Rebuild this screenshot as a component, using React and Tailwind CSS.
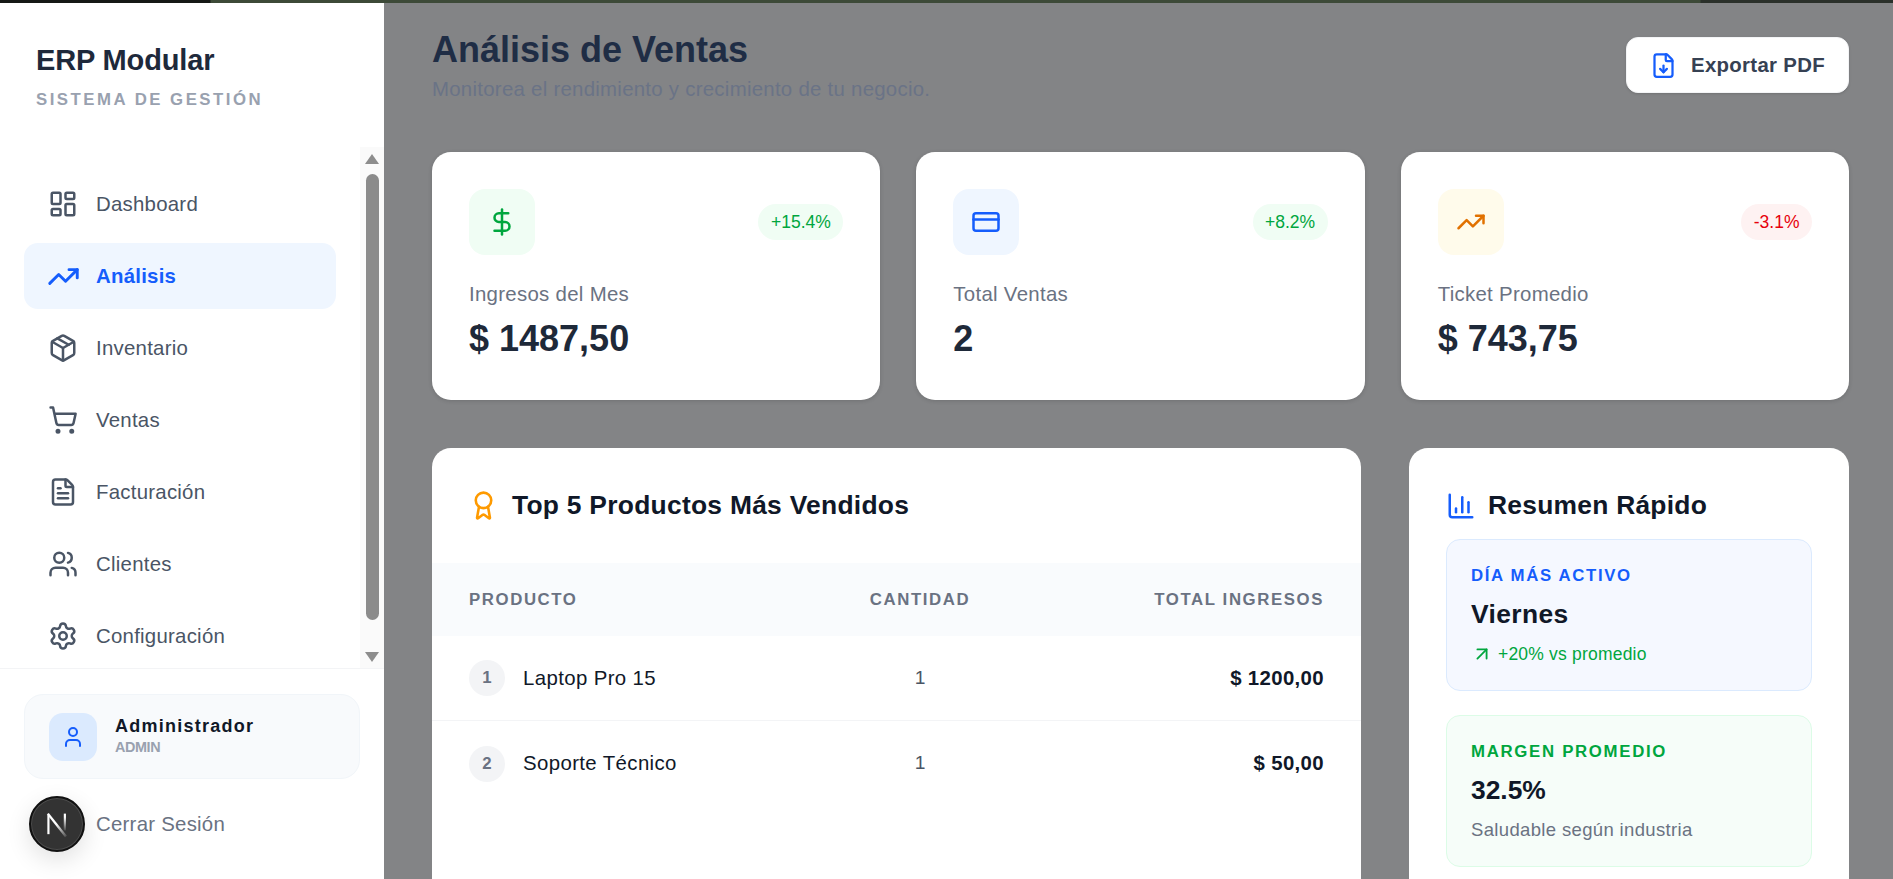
import React from "react";
import {
  LayoutDashboard, TrendingUp, Package, ShoppingCart, FileText, Users, Settings, User,
  DollarSign, CreditCard, FileDown, Award, ChartColumn, ArrowUpRight,
} from "lucide-react";

const nav = [
  { label: "Dashboard", Icon: LayoutDashboard },
  { label: "Análisis", Icon: TrendingUp, active: true },
  { label: "Inventario", Icon: Package },
  { label: "Ventas", Icon: ShoppingCart },
  { label: "Facturación", Icon: FileText },
  { label: "Clientes", Icon: Users },
  { label: "Configuración", Icon: Settings },
];

const stats = [
  { label: "Ingresos del Mes", value: "$ 1487,50", badge: "+15.4%", Icon: DollarSign, box: "bg-[#f0fdf4]", icon: "text-[#00a63e]", pill: "bg-[#f0fdf4] text-[#00a63e]" },
  { label: "Total Ventas", value: "2", badge: "+8.2%", Icon: CreditCard, box: "bg-[#eff6ff]", icon: "text-[#155dfc]", pill: "bg-[#f0fdf4] text-[#00a63e]" },
  { label: "Ticket Promedio", value: "$ 743,75", badge: "-3.1%", Icon: TrendingUp, box: "bg-[#fffbeb]", icon: "text-[#e17100]", pill: "bg-[#fef2f2] text-[#e7000b]" },
];

const rows = [
  { n: 1, name: "Laptop Pro 15", qty: 1, total: "$ 1200,00" },
  { n: 2, name: "Soporte Técnico", qty: 1, total: "$ 50,00" },
];

function Scrollbar() {
  return (
    <div className="w-[24px] shrink-0 bg-[#fafafa] flex flex-col items-center">
      <div className="mt-[7px] w-0 h-0 border-l-[7.5px] border-r-[7.5px] border-b-[10px] border-l-transparent border-r-transparent border-b-[#8d8d8d]" />
      <div className="mt-[10px] w-[13px] h-[446px] rounded-[7px] bg-[#8b8b8b]" />
      <div className="mt-[32px] w-0 h-0 border-l-[7.5px] border-r-[7.5px] border-t-[10px] border-l-transparent border-r-transparent border-t-[#8d8d8d]" />
    </div>
  );
}

function Sidebar() {
  return (
    <aside className="w-[384px] shrink-0 bg-white flex flex-col">
      <div className="h-[144px] shrink-0 pl-[36px] pt-[39px]">
        <h1 className="text-[29px] leading-[36px] font-bold tracking-[-0.15px] text-[#1e293b]">ERP Modular</h1>
        <p className="mt-[10px] text-[16.8px] leading-[24px] font-bold tracking-[2.5px] text-[#99a1af]">SISTEMA DE GESTIÓN</p>
      </div>
      <div className="h-[522px] shrink-0 flex overflow-hidden border-b border-[#f3f4f6]">
        <nav className="flex-1 pl-[24px] pr-[24px] pt-[24px] flex flex-col gap-[6px]">
          {nav.map(({ label, Icon, active }) => (
            <div
              key={label}
              className={`h-[66px] shrink-0 rounded-[14px] pl-[24px] flex items-center gap-[18px] text-[20.4px] tracking-[0.25px] ${
                active ? "bg-[#eff6ff] text-[#155dfc] font-bold" : "text-[#4a5565]"
              }`}
            >
              {active ? (
                <Icon size={33} strokeWidth={2.1} className="shrink-0 mx-[-1.5px]" />
              ) : (
                <Icon size={30} strokeWidth={2} className="shrink-0" />
              )}
              <span className="pt-[1px]">{label}</span>
            </div>
          ))}
        </nav>
        <Scrollbar />
      </div>
      <div className="px-[24px] pt-[25px]">
        <div className="h-[85px] rounded-[19px] bg-[#f8fafc] border border-[#f1f5f9] pl-[24px] flex items-center gap-[18px]">
          <div className="w-[48px] h-[48px] rounded-[14px] bg-[#dbeafe] flex items-center justify-center text-[#155dfc]">
            <User size={24} />
          </div>
          <div className="mt-[-2px]">
            <div className="text-[18px] leading-[22px] font-bold tracking-[1.25px] text-[#101828]">Administrador</div>
            <div className="text-[14.4px] leading-[20px] font-bold tracking-[-0.4px] text-[#99a1af]">ADMIN</div>
          </div>
        </div>
        <div className="mt-[15px] h-[60px] pl-[72px] flex items-center text-[20.4px] tracking-[0.25px] text-[#6a7282]">Cerrar Sesión</div>
      </div>
    </aside>
  );
}

function StatCard({ label, value, badge, Icon, box, icon, pill }) {
  return (
    <div className="h-[248px] rounded-[19px] bg-white shadow-[0_1px_4px_rgba(0,0,0,0.15)] px-[37px] pt-[37px]">
      <div className="flex items-center justify-between">
        <div className={`w-[66px] h-[66px] rounded-[16px] flex items-center justify-center ${box} ${icon}`}>
          <Icon size={30} />
        </div>
        <span className={`h-[36px] px-[12.5px] rounded-full flex items-center text-[17.5px] ${pill}`}>{badge}</span>
      </div>
      <div className="mt-[24px] text-[20.4px] leading-[30px] tracking-[0.3px] text-[#6a7282]">{label}</div>
      <div className="mt-[5px] text-[36px] leading-[50px] font-bold text-[#1e2939]">{value}</div>
    </div>
  );
}

function TopProducts() {
  return (
    <section className="h-[460px] rounded-t-[19px] bg-white">
      <div className="h-[115px] pl-[37px] flex items-center gap-[13px]">
        <Award size={31} className="text-[#fe9a00] shrink-0 ml-[-1px]" />
        <h2 className="text-[26.4px] tracking-[0.27px] font-bold text-[#101828]">Top 5 Productos Más Vendidos</h2>
      </div>
      <div className="h-[73px] bg-[#f9fbfd] grid grid-cols-[392px_118px_1fr] items-center px-[37px] text-[16.8px] font-bold tracking-[1.6px] text-[#6a7282]">
        <span>PRODUCTO</span>
        <span className="text-center whitespace-nowrap">CANTIDAD</span>
        <span className="text-right">TOTAL INGRESOS</span>
      </div>
      {rows.map((r, i) => (
        <div key={r.n} className={`h-[85px] grid grid-cols-[392px_118px_1fr] items-center px-[37px] ${i === 0 ? "border-b border-[#f3f4f6]" : ""}`}>
          <div className="flex items-center gap-[18px]">
            <span className="w-[36px] h-[36px] rounded-full bg-[#f3f4f6] flex items-center justify-center text-[16.8px] font-bold text-[#6a7282]">{r.n}</span>
            <span className="text-[20.4px] tracking-[0.38px] text-[#101828]">{r.name}</span>
          </div>
          <span className="text-center text-[19.2px] text-[#4a5565]">{r.qty}</span>
          <span className="text-right text-[20.4px] tracking-[0.35px] font-bold text-[#101828]">{r.total}</span>
        </div>
      ))}
    </section>
  );
}

function Summary() {
  return (
    <section className="h-[460px] rounded-t-[19px] bg-white px-[37px]">
      <div className="h-[91px] flex items-center gap-[12px] pt-[25px]">
        <ChartColumn size={30} className="text-[#155dfc] shrink-0" />
        <h2 className="text-[26.4px] tracking-[0.25px] font-bold text-[#101828]">Resumen Rápido</h2>
      </div>
      <div className="h-[152px] rounded-[14px] bg-[#f5f8ff] border border-[#dbeafe] px-[24px] pt-[24px]">
        <div className="text-[16.8px] leading-[24px] font-bold tracking-[1.65px] text-[#155dfc]">DÍA MÁS ACTIVO</div>
        <div className="mt-[8px] text-[26.4px] leading-[36px] tracking-[0.4px] font-bold text-[#101828]">Viernes</div>
        <div className="mt-[10px] flex items-center gap-[5px] text-[17.5px] leading-[24px] tracking-[0.2px] text-[#00a63e]">
          <ArrowUpRight size={22} className="shrink-0" />
          <span>+20% vs promedio</span>
        </div>
      </div>
      <div className="mt-[24px] h-[152px] rounded-[14px] bg-[#f6fdf9] border border-[#dcfce7] px-[24px] pt-[24px]">
        <div className="text-[16.8px] leading-[24px] font-bold tracking-[1.7px] text-[#00a63e]">MARGEN PROMEDIO</div>
        <div className="mt-[8px] text-[26.4px] leading-[36px] font-bold text-[#101828]">32.5%</div>
        <div className="mt-[10px] text-[18.5px] leading-[24px] tracking-[0.35px] text-[#6a7282]">Saludable según industria</div>
      </div>
    </section>
  );
}

export default function App() {
  return (
    <div className="relative h-[879px] w-full overflow-hidden bg-[#838486] flex flex-col font-['Liberation_Sans',Arial,sans-serif]">
      <div className="h-[3px] shrink-0 bg-[linear-gradient(90deg,#161816_210px,#3d4a38_211px,#3d4a38_1700px,#2a302a_1701px)]" />
      <div className="flex-1 flex min-h-0">
        <Sidebar />
        <main className="flex-1 min-w-0 pl-[48px] pr-[44px] overflow-hidden">
          <header className="h-[149px] flex justify-between items-start">
            <div className="pt-[25px]">
              <h2 className="text-[36px] leading-[43px] font-bold text-[#1f2d45]">Análisis de Ventas</h2>
              <p className="mt-[4px] text-[20.4px] leading-[29px] tracking-[0.27px] text-[#6a7386]">Monitorea el rendimiento y crecimiento de tu negocio.</p>
            </div>
            <button className="mt-[34px] w-[223px] h-[56px] rounded-[12px] bg-white border border-[#f3f4f6] shadow-sm flex items-center justify-center gap-[14px] text-[20.4px] tracking-[0.3px] font-bold text-[#364153]">
              <FileDown size={27} className="text-[#155dfc]" />
              Exportar PDF
            </button>
          </header>
          <div className="grid grid-cols-3 gap-[36px]">
            {stats.map((s) => <StatCard key={s.label} {...s} />)}
          </div>
          <div className="mt-[48px] grid grid-cols-[929px_1fr] gap-[48px]">
            <TopProducts />
            <Summary />
          </div>
        </main>
      </div>
      <div className="absolute left-[29px] top-[796px] w-[56px] h-[56px] rounded-full bg-[#333] border-2 border-[#111] shadow-[0_8px_24px_rgba(0,0,0,0.12),inset_0_0_0_1px_rgba(255,255,255,0.12)] flex items-center justify-center">
        <svg width="29" height="29" viewBox="0 0 24 24" fill="none">
          <defs>
            <linearGradient id="nDiag" x1="4" y1="3" x2="20" y2="22" gradientUnits="userSpaceOnUse">
              <stop offset="0.45" stopColor="#fff" />
              <stop offset="1" stopColor="#fff" stopOpacity="0.1" />
            </linearGradient>
            <linearGradient id="nStem" x1="18" y1="3" x2="18" y2="17" gradientUnits="userSpaceOnUse">
              <stop offset="0.2" stopColor="#fff" />
              <stop offset="1" stopColor="#fff" stopOpacity="0.1" />
            </linearGradient>
          </defs>
          <path d="M4.5 4v16" stroke="#fff" strokeWidth="1.8" />
          <path d="M4 3l15 19" stroke="url(#nDiag)" strokeWidth="2" />
          <rect x="17.2" y="3" width="1.8" height="14" fill="url(#nStem)" />
        </svg>
      </div>
    </div>
  );
}
